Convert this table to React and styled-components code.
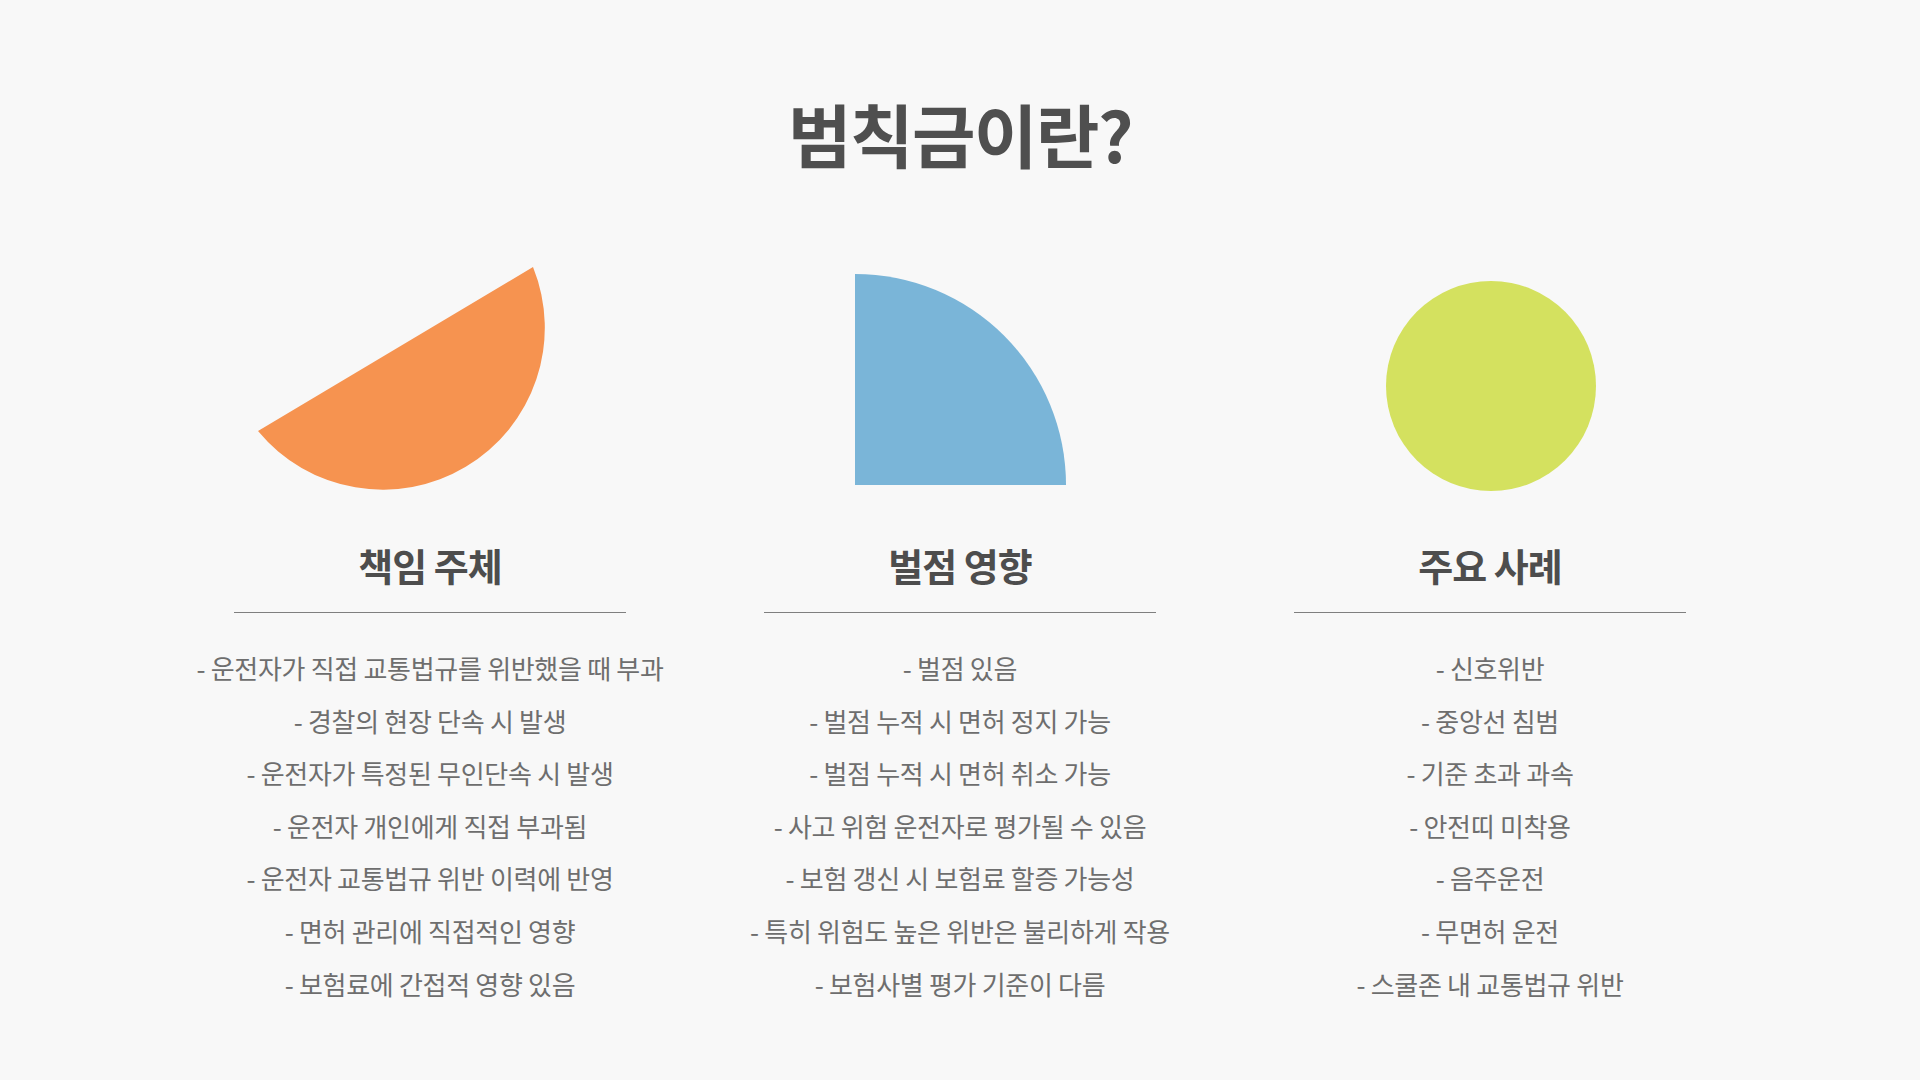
import React from 'react';
import styled, { createGlobalStyle } from 'styled-components';

const GlobalStyle = createGlobalStyle`
  html, body {
    margin: 0;
    padding: 0;
    background: #f8f8f8;
  }
  body {
    font-family: "Noto Sans CJK KR", "Noto Sans", sans-serif;
  }
`;

const Page = styled.main`
  width: 1920px;
  height: 1080px;
  background: #f8f8f8;
  display: flex;
  flex-direction: column;
  align-items: center;
  padding-top: 94px;
  box-sizing: border-box;
  overflow: hidden;
`;

const Title = styled.h1`
  margin: 0;
  font-size: 69px;
  line-height: 78px;
  font-weight: 700;
  letter-spacing: -1.5px;
  color: #4f4f4f;
`;

const Columns = styled.div`
  display: grid;
  grid-template-columns: repeat(3, 530px);
  justify-content: center;
  margin-top: 94px;
`;

const Column = styled.section`
  display: flex;
  flex-direction: column;
  align-items: center;
`;

const Figure = styled.svg`
  display: block;
  width: 530px;
  height: 226px;
`;

const Heading = styled.h2`
  margin: 51px 0 0;
  font-size: 38px;
  line-height: 44px;
  font-weight: 700;
  letter-spacing: -1px;
  color: #4d4d4d;
`;

const Rule = styled.hr`
  width: 392px;
  margin: 25px 0 0;
  border: 0;
  border-top: 1px solid #7f7f7f;
`;

const List = styled.ul`
  list-style: none;
  margin: 29px 0 0;
  padding: 0;
  text-align: center;
  white-space: nowrap;
`;

const Item = styled.li`
  font-size: 26px;
  line-height: 52.6px;
  font-weight: 400;
  letter-spacing: -0.3px;
  color: #6e6e6e;
`;

// 각 칼럼의 도형 (칼럼 전체 폭 기준 좌표)
const Shape = ({ kind }) => (
  <Figure viewBox="0 0 530 226">
    {kind === 'chord' && (
      <path d="M 93 165 A 162 162 0 0 0 368 1 Z" fill="#f69350" />
    )}
    {kind === 'quarter' && (
      <path d="M 160 8 A 211 211 0 0 1 371 219 L 160 219 Z" fill="#7ab5d8" />
    )}
    {kind === 'circle' && <circle cx="266" cy="120" r="105" fill="#d4e15f" />}
  </Figure>
);

const sections = [
  {
    shape: 'chord',
    title: '책임 주체',
    items: [
      '운전자가 직접 교통법규를 위반했을 때 부과',
      '경찰의 현장 단속 시 발생',
      '운전자가 특정된 무인단속 시 발생',
      '운전자 개인에게 직접 부과됨',
      '운전자 교통법규 위반 이력에 반영',
      '면허 관리에 직접적인 영향',
      '보험료에 간접적 영향 있음',
    ],
  },
  {
    shape: 'quarter',
    title: '벌점 영향',
    items: [
      '벌점 있음',
      '벌점 누적 시 면허 정지 가능',
      '벌점 누적 시 면허 취소 가능',
      '사고 위험 운전자로 평가될 수 있음',
      '보험 갱신 시 보험료 할증 가능성',
      '특히 위험도 높은 위반은 불리하게 작용',
      '보험사별 평가 기준이 다름',
    ],
  },
  {
    shape: 'circle',
    title: '주요 사례',
    items: [
      '신호위반',
      '중앙선 침범',
      '기준 초과 과속',
      '안전띠 미착용',
      '음주운전',
      '무면허 운전',
      '스쿨존 내 교통법규 위반',
    ],
  },
];

const App = () => (
  <>
    <GlobalStyle />
    <Page>
      <Title>범칙금이란?</Title>
      <Columns>
        {sections.map((section) => (
          <Column key={section.title}>
            <Shape kind={section.shape} />
            <Heading>{section.title}</Heading>
            <Rule />
            <List>
              {section.items.map((item) => (
                <Item key={item}>- {item}</Item>
              ))}
            </List>
          </Column>
        ))}
      </Columns>
    </Page>
  </>
);

export default App;
